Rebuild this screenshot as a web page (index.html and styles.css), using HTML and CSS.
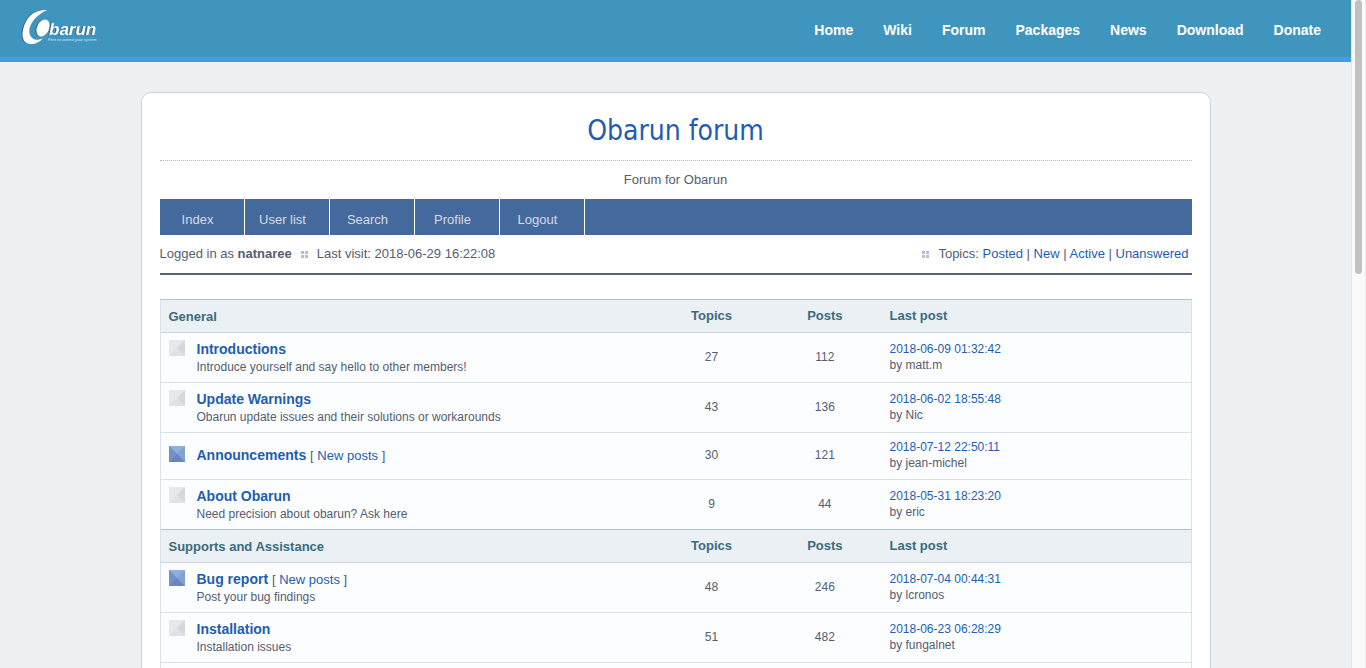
FILE: index.html
```html
<!DOCTYPE html>
<html lang="en">
<head>
<meta charset="utf-8">
<title>Obarun forum</title>
<link rel="stylesheet" href="styles.css">
</head>
<body>
<svg class="sprites" aria-hidden="true">
  <symbol id="icon-read" viewBox="0 0 16 16">
    <path fill="#dfe2e7" d="M0 0h16v16H0z"/>
    <path fill="#e5e8ed" d="M0 0h16L0 16z"/>
    <path fill="#d4d9de" d="M16 0v16L8 8z"/>
  </symbol>
  <symbol id="icon-new" viewBox="0 0 16 16">
    <path fill="#6b84bd" d="M0 0h16v16H0z"/>
    <path fill="#7fa1d3" d="M0 0h16v16z"/>
    <path fill="#8cafdc" d="M0 0h16L8 8z"/>
    <path fill="#7094c8" d="M0 0v16L8 8z"/>
  </symbol>
</svg>
<div class="window">
  <div class="page">
    <header class="topbar">
      <a class="logo" href="#" aria-label="Obarun home">
        <svg width="80" height="40" viewBox="0 0 80 40">
          <g class="shadowed" fill="#fff">
            <path d="M26 2C12 1 4 11 2 22C0 31 4 36 10 36C15 36 19 34 22 30C17 33 11 32 9 27C6 19 13 8 26 2z"/>
            <ellipse cx="22" cy="20" rx="6" ry="9" transform="rotate(24 22 20)"/>
          </g>
          <text class="logo-name shadowed" x="28" y="27">barun</text>
          <text class="logo-tag" x="27" y="33">Free to control your system</text>
        </svg>
      </a>
      <nav class="topnav">
        <a href="#">Home</a>
        <a href="#">Wiki</a>
        <a href="#">Forum</a>
        <a href="#">Packages</a>
        <a href="#">News</a>
        <a href="#">Download</a>
        <a href="#">Donate</a>
      </nav>
    </header>
    <main class="card">
      <h1 class="title"><a href="#">Obarun forum</a></h1>
      <p class="tagline">Forum for Obarun</p>
      <nav class="menu">
        <a href="#">Index</a>
        <a href="#">User list</a>
        <a href="#">Search</a>
        <a href="#">Profile</a>
        <a href="#">Logout</a>
      </nav>
      <div class="welcome">
        <div class="status">
          <span>Logged in as <strong>natnaree</strong></span>
          <i class="dots"></i>
          <span>Last visit: 2018-06-29 16:22:08</span>
        </div>
        <div class="status">
          <i class="dots"></i>
          <span>Topics: <a href="#">Posted</a> | <a href="#">New</a> | <a href="#">Active</a> | <a href="#">Unanswered</a></span>
        </div>
      </div>

      <table class="forums">
        <thead>
          <tr><th class="col-forum">General</th><th class="col-count">Topics</th><th class="col-count">Posts</th><th class="col-last">Last post</th></tr>
        </thead>
        <tbody>
          <tr>
            <td><div class="forum"><svg class="icon"><use href="#icon-read"/></svg><div><h3><a href="#">Introductions</a></h3><p>Introduce yourself and say hello to other members!</p></div></div></td>
            <td class="count">27</td><td class="count">112</td>
            <td class="last"><a href="#">2018-06-09 01:32:42</a><span>by matt.m</span></td>
          </tr>
          <tr>
            <td><div class="forum"><svg class="icon"><use href="#icon-read"/></svg><div><h3><a href="#">Update Warnings</a></h3><p>Obarun update issues and their solutions or workarounds</p></div></div></td>
            <td class="count">43</td><td class="count">136</td>
            <td class="last"><a href="#">2018-06-02 18:55:48</a><span>by Nic</span></td>
          </tr>
          <tr>
            <td><div class="forum forum-short"><svg class="icon"><use href="#icon-new"/></svg><div><h3><a href="#">Announcements</a> <span class="new">[ <a href="#">New posts</a> ]</span></h3></div></div></td>
            <td class="count">30</td><td class="count">121</td>
            <td class="last"><a href="#">2018-07-12 22:50:11</a><span>by jean-michel</span></td>
          </tr>
          <tr>
            <td><div class="forum"><svg class="icon"><use href="#icon-read"/></svg><div><h3><a href="#">About Obarun</a></h3><p>Need precision about obarun? Ask here</p></div></div></td>
            <td class="count">9</td><td class="count">44</td>
            <td class="last"><a href="#">2018-05-31 18:23:20</a><span>by eric</span></td>
          </tr>
        </tbody>
      </table>

      <table class="forums">
        <thead>
          <tr><th class="col-forum">Supports and Assistance</th><th class="col-count">Topics</th><th class="col-count">Posts</th><th class="col-last">Last post</th></tr>
        </thead>
        <tbody>
          <tr>
            <td><div class="forum"><svg class="icon"><use href="#icon-new"/></svg><div><h3><a href="#">Bug report</a> <span class="new">[ <a href="#">New posts</a> ]</span></h3><p>Post your bug findings</p></div></div></td>
            <td class="count">48</td><td class="count">246</td>
            <td class="last"><a href="#">2018-07-04 00:44:31</a><span>by lcronos</span></td>
          </tr>
          <tr>
            <td><div class="forum"><svg class="icon"><use href="#icon-read"/></svg><div><h3><a href="#">Installation</a></h3><p>Installation issues</p></div></div></td>
            <td class="count">51</td><td class="count">482</td>
            <td class="last"><a href="#">2018-06-23 06:28:29</a><span>by fungalnet</span></td>
          </tr>
          <tr><td></td><td></td><td></td><td></td></tr>
        </tbody>
      </table>
    </main>
  </div>
  <div class="scrollbar"><div class="thumb"></div></div>
</div>
</body>
</html>
```

FILE: styles.css
```css
* { box-sizing: border-box; }

body {
  margin: 0;
  background: #eff0f2;
  color: #555d70;
  font: 13px/18px "Liberation Sans", Arial, sans-serif;
}

h1, h3, p { margin: 0; }

a { color: #1f5db0; text-decoration: none; }

.sprites { display: none; }

.window {
  display: grid;
  grid-template-columns: minmax(0, 1fr) 15px;
  height: 100vh;
  overflow: hidden;
}

.page { min-width: 0; }

/* Top bar */
.topbar {
  display: flex;
  align-items: center;
  justify-content: space-between;
  padding: 8px 30px 9px 21px;
  background: #4095bf;
  border-bottom: 5px solid #429ee3;
}

.logo svg { display: block; }

.shadowed { filter: drop-shadow(-1px 0 0 #2b6483); }

.logo-name {
  font: italic bold 17px "Liberation Sans", Arial, sans-serif;
  fill: #fff;
}

.logo-tag {
  font: italic 4px "Liberation Sans", sans-serif;
  fill: #d8eaf3;
}

.topnav { display: flex; gap: 30px; padding-top: 3px; }

.topnav a {
  color: #fff;
  font-size: 14px;
  font-weight: bold;
}

/* Forum card */
.card {
  max-width: 1070px;
  margin: 30px auto 0;
  padding: 18px 18px 40px;
  background: #fff;
  border: 1px solid #c7d7e2;
  border-radius: 10px;
}

.title {
  padding-bottom: 9px;
  border-bottom: 1px dotted #aeb9c8;
  font: 28px/40px "DejaVu Sans Condensed", "DejaVu Sans", sans-serif;
  text-align: center;
}

.tagline { padding: 10px 0; text-align: center; }

.menu { display: flex; background: #44699c; }

.menu a {
  width: 85px;
  padding: 12px 8px 6px 0;
  border-right: 1px solid #fff;
  color: #d5dce7;
  text-align: center;
}

.welcome {
  display: flex;
  justify-content: space-between;
  margin-bottom: 24px;
  padding: 10px 3px 10px 0;
  border-bottom: 2px solid #566579;
}

.status { display: flex; align-items: center; gap: 9px; }

.dots {
  width: 7px;
  height: 7px;
  background:
    linear-gradient(#fff, #fff) center / 1px 100% no-repeat,
    linear-gradient(#fff, #fff) center / 100% 1px no-repeat,
    #b3bfcc;
}

/* Forum lists */
.forums {
  width: 100%;
  table-layout: fixed;
  border-collapse: separate;
  border-spacing: 0;
  border: 1px solid #d9e2ea;
  border-top: 1px solid #b4c2cd;
  border-bottom: 0;
}

.forums th {
  padding: 7px 8px;
  background: #ebf0f4;
  border-bottom: 1px solid #c7d7e2;
  color: #3a6b7d;
  text-align: left;
}

.forums .col-forum { width: 48%; padding: 8px 8px 6px; }
.forums .col-count { width: 11%; text-align: center; }
.forums .col-last { width: 30%; }

.forums td {
  height: 47px;
  padding: 7px 8px 6px;
  background: #fbfdff;
  border-bottom: 1px solid #d9e2ea;
  font-size: 12px;
  line-height: 16px;
}

.forums tbody tr:last-child td { border-bottom: 0; }

.forum { display: flex; gap: 12px; }

.forum-short { padding-bottom: 4px; }

.forum p { line-height: 18px; }

.forum h3 { font-size: 14px; line-height: 18px; }

.new { font-size: 13px; font-weight: normal; line-height: 14px; }

.icon { flex: none; width: 16px; height: 16px; }

.forums .count { padding: 6px 8px 8px; text-align: center; }

.forums .last { padding: 6px 8px 8px; }

.last a, .last span { display: block; }

/* Scroll bar */
.scrollbar {
  padding: 0 3px;
  background: #fafafa;
  border-left: 1px solid #e6e6e6;
  border-right: 1px solid #ededed;
}

.thumb {
  height: 41vh;
  background: #c1c1c1;
  border-radius: 4px;
}
```
